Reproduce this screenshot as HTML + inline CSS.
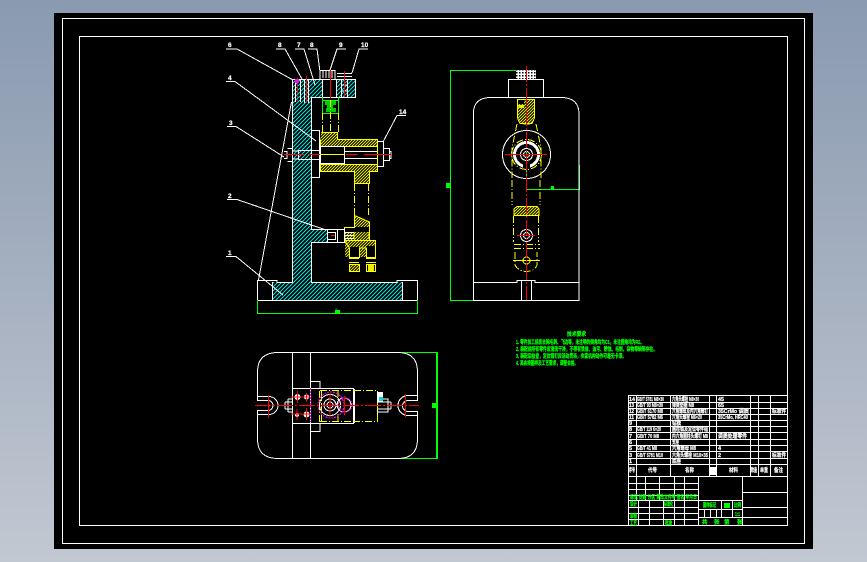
<!DOCTYPE html>
<html><head><meta charset="utf-8"><style>
html,body{margin:0;padding:0;width:867px;height:562px;overflow:hidden;background:linear-gradient(180deg,#8a9ab0 0,#a5b0c0 50%,#c2c8d2 100%)}
svg{position:absolute;left:0;top:0}
text{font-family:"Liberation Sans","Noto Sans CJK SC",sans-serif;font-weight:bold}
.w{fill:none;stroke:#fff;stroke-width:1}
.y{fill:none;stroke:#ff0;stroke-width:1}
.yd{fill:none;stroke:#ff0;stroke-width:1;stroke-dasharray:7 2 1 2}
.g{fill:none;stroke:#0f0;stroke-width:1}
.r{fill:none;stroke:#f00;stroke-width:1}
.rd{fill:none;stroke:#f00;stroke-width:1;stroke-dasharray:16 2 2 2}
.m{fill:none;stroke:#f0f;stroke-width:1;stroke-dasharray:2 1}
.lb{fill:#fff;font-size:6.5px;stroke:#fff;stroke-width:.2}
.tt{fill:#fff;font-size:5.5px;stroke:#fff;stroke-width:.2}
.gt{fill:#0f0;font-size:5.5px;stroke:#0f0;stroke-width:.25}
</style></head><body>
<svg width="867" height="562" viewBox="0 0 867 562" xmlns="http://www.w3.org/2000/svg" shape-rendering="crispEdges">
<defs>
<pattern id="hc" width="4" height="4" patternUnits="userSpaceOnUse"><rect width="4" height="4" fill="#000"/><path d="M-1 1 1-1M0 4 4 0M3 5 5 3" stroke="#0dd" stroke-width="1"/></pattern>
<pattern id="hy" width="3" height="3" patternUnits="userSpaceOnUse"><rect width="3" height="3" fill="#000"/><path d="M-1 1 1-1M0 3 3 0M2 4 4 2" stroke="#dd0" stroke-width="1"/></pattern>
<pattern id="hm" width="3" height="3" patternUnits="userSpaceOnUse"><rect width="3" height="3" fill="#fff"/><rect width="1.5" height="1.5" fill="#000"/></pattern>
</defs>
<rect x="54" y="13" width="759" height="536" fill="#000"/>
<rect class="w" x="62.5" y="18.5" width="742" height="525"/>
<rect class="w" x="79.5" y="36.5" width="708" height="489"/>

<!-- SIDE VIEW -->
<path d="M272 282H292V79H322V97H311V229H327V242H311V282H402V300H272Z" fill="url(#hc)"/>
<rect x="336" y="79" width="19" height="18" fill="url(#hc)"/>
<path class="w" d="M292.5 79.5H355.5V97.5H311.5V229.5H327.5M327.5 242.5H311.5V282.5H397V280.5H417.5V300.5H257.5V280.5H277V282.5H292.5V79.5"/>
<path class="w" d="M272.5 282V300M402.5 282V300M322.5 80V97M336.5 80V97"/>
<path class="w" d="M291.5 102 258.5 280"/>
<rect class="w" x="311.5" y="130.5" width="8" height="47"/>
<path class="w" d="M320 70V79M335 70V79M320.5 70.5H335.5M323 71V78M326 71V78M329 71V78M332 71V78M337 73.5H352M337 76.5H352M341.5 79V97M347.5 79V97M341 85H347M341 91H347"/>
<path class="w" d="M295.5 80V102M300.5 80V102M304.5 80V103M308.5 80V103"/>
<path class="rd" d="M297.5 78V102"/>
<path class="r" d="M306.5 76V103M344.5 71V97M330.5 70V98"/>
<rect x="295" y="79" width="4" height="4" fill="#f0f"/>
<!-- green block -->
<path class="g" d="M322.5 97V113.5H338.5V97M322.5 100.5H338.5"/>
<rect x="325" y="101" width="11" height="4" fill="#0c0"/><rect x="327" y="105" width="6" height="3" fill="#0c0"/><rect x="326" y="108" width="10" height="4" fill="#0c0"/>
<path class="yd" d="M322.5 113V132M338.5 113V132M330.5 100V135"/>
<!-- housing -->
<path d="M321 132H337V139H377V146H320ZM320 164H377V171H369V183H354V171H320Z" fill="url(#hy)"/>
<path class="y" d="M321.5 132.5H337.5V139.5H377.5V171.5H369.5V183.5H354.5V171.5H320.5V139.5"/>
<path class="y" d="M320.5 146.5H377.5M320.5 164.5H377.5"/>
<rect class="w" x="320.5" y="146.5" width="24" height="17"/>
<path class="y" d="M320 154.5H344"/>
<path class="w" d="M344 151.5H377M344 158.5H377M344.5 146V164"/>
<path class="w" d="M377.5 141.5H383.5V166.5H377.5M383.5 148.5H389.5V160.5H383.5M389 151.5H391V158.5H389M284 151.5H287V158.5H284M287.5 148.5H292.5V161.5H287.5M292 151H298.5V159H292M298 150.5H320.5M298 159.5H320.5"/>
<path class="r" d="M284 154.5H304M308 154.5H320M346 154.5H358M364 154.5H391"/>
<path class="yd" d="M354.5 184V215M368.5 184V215"/>
<path d="M354 215 369 222V232H344V240H369V227H354Z" fill="url(#hy)"/>
<path class="y" d="M354.5 215.5 369.5 222V240.5H344.5V227.5H354.5Z"/>
<path d="M345 240H375V246H366V257H359V247H349V257H345Z" fill="url(#hy)"/>
<path class="y" d="M344.5 240.5H375.5V257.5H366.5V248H359.5V257.5H349.5V248L344.5 240.5"/>
<path class="y" d="M349 258.5H359M349 262.5H359M366 258.5H376M366 262.5H376"/>
<rect class="y" x="349.5" y="264.5" width="10" height="7"/><rect class="y" x="366.5" y="264.5" width="9" height="7"/>
<rect x="350" y="265" width="9" height="6" fill="url(#hy)"/><rect x="368" y="265" width="6" height="6" fill="#ee0"/>
<!-- arm box -->
<path class="w" d="M327.5 229.5H344.5V242.5H327.5ZM337.5 229.5V242.5M344 232.5H354M344 235.5H354M344 238.5H354"/>
<rect class="w" x="327.5" y="232.5" width="8" height="7"/>
<path class="r" d="M331 235.5H335"/>
<path class="yd" d="M354 232V240M369 232V240"/>
<!-- leaders -->
<path class="w" d="M226 49H237L293 80M276 49H285L302 79M295 49H304L315 85M308 49H317L320 72M346 49H337L330 70M368 49H359L352 73M226 81.5H235L316 141M227 126.5H236L284 157M406 115.5H397L383 142M227 199.5H237L326 230M226 256.5H236L283 295"/>
<text class="lb" x="228" y="47">6</text><text class="lb" x="278" y="47">8</text><text class="lb" x="297" y="47">7</text><text class="lb" x="310" y="47">8</text><text class="lb" x="339" y="47">9</text><text class="lb" x="361" y="47">10</text>
<text class="lb" x="228" y="80">4</text><text class="lb" x="229" y="125">3</text><text class="lb" x="399" y="114">14</text><text class="lb" x="228" y="198">2</text><text class="lb" x="228" y="255">1</text>
<path d="M257.5 300V314M417.5 300V314M258 313.5H417" fill="none" stroke="#0f0"/>
<rect x="335" y="310" width="5" height="4" fill="#0f0"/>
<text x="335" y="311" fill="#0f0" font-size="4">1</text>

<!-- FRONT VIEW -->
<path class="g" d="M516 70.5H450.5V300.5H473M526.5 150V189.5H579.5V165"/>
<rect x="446" y="183" width="4" height="5" fill="#0f0"/><rect x="551" y="186" width="3" height="4" fill="#0f0"/>
<text x="446" y="187" fill="#0f0" font-size="4">1</text>
<path class="w" d="M473.5 300.5V113Q473.5 98 490 97.5H562Q578.5 98 579 113V300.5H473.5ZM473.5 282.5H517V280.5H535V282.5H579M521.5 281V300M531.5 281V300"/>
<rect class="w" x="508.5" y="79.5" width="35" height="18"/>
<rect x="516" y="70" width="20" height="9" fill="url(#hm)"/>
<circle class="w" cx="526.5" cy="154.5" r="24"/>
<circle cx="526.5" cy="154.5" r="12" fill="none" stroke="#fff" stroke-width="3"/>
<circle class="w" cx="526.5" cy="154.5" r="6"/><circle class="w" cx="526.5" cy="154.5" r="3"/>
<rect x="523" y="162" width="7" height="6" fill="#000"/>
<circle class="yd" cx="526.5" cy="154.5" r="15"/>
<path d="M517 99H535V117L532 123H520L517 117Z" fill="url(#hy)"/>
<path class="y" d="M517.5 99.5H534.5V118L532 123.5H520L517.5 118ZM517.5 107H524M528 123.5H520M523.5 124H530"/>
<rect x="518" y="100" width="6" height="4" fill="#000"/><rect x="519" y="105" width="5" height="3" fill="#ee0"/>
<path class="yd" d="M517 124 512 148V178M536 124 541 148V178"/>
<path class="y" d="M508 154.5H514M539 154.5H545"/>
<path class="yd" d="M512 180V205M540 180V205"/>
<path d="M514 207H539V215H514Z" fill="url(#hy)"/>
<path class="y" d="M517 206.5H537L539 209V215.5H514V209Z"/>
<path class="yd" d="M513.5 216V242M538.5 216V242M514 244.5H540M514 248.5H540"/>
<path class="yd" d="M515 252V265Q518 271 526 271.5 535 271 537 265V252"/>
<circle class="y" cx="526.5" cy="260.5" r="3.5"/>
<path class="y" d="M513 260.5H540"/>
<circle class="w" cx="526.5" cy="235.5" r="6"/><circle class="w" cx="526.5" cy="235.5" r="3"/>
<path class="r" d="M517 235.5H535M505 154.5H547"/>
<path class="rd" d="M526.5 66V300"/>

<!-- TOP VIEW -->
<path class="g" d="M399 352.5H437.5V458.5H399M436.5 352V458"/>
<rect x="432" y="403" width="4" height="5" fill="#0f0"/>
<text x="432" y="407" fill="#0f0" font-size="4">1</text>
<path class="w" d="M277 352.5H399Q417 353 417.5 371V400.5H408A5.5 5.5 0 0 0 408 411.5H417.5V440Q417 458 399 458.5H277Q258 458 257.5 440V410.5H268A5 5 0 0 0 268 400.5H257.5V371Q258 353 277 352.5Z"/>
<path class="w" d="M257.5 396.5H269A9 9 0 0 1 269 414.5H257.5M417 395.5H408A10 10 0 0 0 408 415.5H417"/>
<path class="w" d="M292.5 352V458M310.5 352V458M292.5 388.5H353.5V423.5H292.5M310.5 381.5H320V388M310.5 431.5H320V424M354.5 389V423"/>
<path class="w" d="M285 402H292M285 409H292M285 402V409M288 399H292M288 412H292M288 399V412M377.5 392V422M377 402H391M377 409H391M391 402V409M377 399H388V412H377"/>
<path class="yd" d="M320 390.5H354M354 390.5H377.5V421.5H354M320 421.5H354M319.5 391V422M321.5 391V422M338 390V422"/>
<circle class="w" cx="330" cy="405" r="10.5"/><circle class="w" cx="330" cy="405" r="6"/><circle class="w" cx="330" cy="405" r="3"/><circle class="w" cx="344" cy="405" r="7"/>
<circle class="m" cx="331" cy="405" r="13"/><circle class="m" cx="345" cy="405" r="7"/>
<path class="m" d="M310.5 388V422"/>
<circle cx="297.5" cy="397" r="3" fill="#fff"/><circle cx="306.5" cy="397" r="2.5" fill="#fff"/><circle cx="297" cy="415" r="2" fill="#fff"/><circle cx="306.5" cy="414.5" r="3" fill="#fff"/>
<rect x="377" y="392" width="6" height="10" fill="#fff"/><rect x="379" y="397" width="4" height="4" fill="#0dd"/>
<path class="r" d="M291 397H310M297.5 391V403M306.5 393V402M291 414H310M297 409V420M306.5 408V420M330 393V417M344.5 396V415M268.5 395V418M405.5 394V417"/>
<path class="rd" d="M255 405.5H419"/>

<!-- NOTES -->
<text class="gt" x="567" y="336" textLength="19" lengthAdjust="spacingAndGlyphs">技术要求</text>
<text class="gt" x="516" y="344" textLength="128" lengthAdjust="spacingAndGlyphs">1. 零件加工前应去除毛刺、飞边等，未注明的倒角均为C1，未注圆角均为R2。</text>
<text class="gt" x="516" y="351" textLength="141" lengthAdjust="spacingAndGlyphs">2. 装配前所有零件应清洗干净，不得有铁屑、油污、锈蚀、毛刺、杂物等缺陷存在。</text>
<text class="gt" x="516" y="358" textLength="110" lengthAdjust="spacingAndGlyphs">3. 装配后检查，定位销钉应活动灵活，夹紧机构动作可靠无卡滞。</text>
<text class="gt" x="516" y="365" textLength="62" lengthAdjust="spacingAndGlyphs">4. 其余按图样及工艺要求，调整合格。</text>

<!-- TITLE BLOCK -->
<path class="w" d="M628.5 395.5H787.5M628.5 402.5H787M628.5 408.5H787M628.5 414.5H787M628.5 420.5H787M628.5 426.5H787M628.5 432.5H787M628.5 439.5H787M628.5 445.5H787M628.5 451.5H787M628.5 458.5H787M628.5 464.5H787M628.5 476.5H787"/>
<path class="w" d="M628.5 395V525M636.5 395V476M670.5 395V476M709.5 395V476M716.5 395V476M750.5 395V476M758.5 395V476M770.5 395V476"/>
<path class="w" d="M628 483.5H698M628 489.5H698M628 495.5H698M628 500.5H698M628 507.5H698M628 513.5H698M628 519.5H698"/>
<path class="w" d="M636.5 476V500M645.5 476V500M659.5 476V500M674.5 476V500M684.5 476V500M698.5 476V525M638.5 500V525M649.5 500V525M663.5 500V525M674.5 500V525M684.5 500V525"/>
<path class="w" d="M742.5 476V525M742 492.5H787M742 507.5H787M742 517.5H787M698 500.5H742M698 509.5H742M698 517.5H742M721.5 500V517M732.5 500V517M704.5 509V517M710.5 509V517M716.5 509V517"/>
<text class="tt" x="629" y="401" textLength="6" lengthAdjust="spacingAndGlyphs">14</text><text class="tt" x="637" y="401" textLength="27" lengthAdjust="spacingAndGlyphs">GB/T 5781 M8×30</text><text class="tt" x="672" y="401" textLength="27" lengthAdjust="spacingAndGlyphs">六角头螺栓 M8×30</text><text class="tt" x="718" y="401" textLength="6" lengthAdjust="spacingAndGlyphs">45</text>
<text class="tt" x="629" y="407" textLength="5" lengthAdjust="spacingAndGlyphs">13</text><text class="tt" x="637" y="407" textLength="26" lengthAdjust="spacingAndGlyphs">GB/T 93 M8×30</text><text class="tt" x="672" y="407" textLength="22" lengthAdjust="spacingAndGlyphs">弹簧垫圈 M8</text><text class="tt" x="718" y="407" textLength="6" lengthAdjust="spacingAndGlyphs">65</text>
<text class="tt" x="629" y="413" textLength="5" lengthAdjust="spacingAndGlyphs">12</text><text class="tt" x="637" y="413" textLength="26" lengthAdjust="spacingAndGlyphs">GB/T 6170 M8</text><text class="tt" x="672" y="413" textLength="36" lengthAdjust="spacingAndGlyphs">六角螺母及内六角螺钉</text><text class="tt" x="718" y="413" textLength="31" lengthAdjust="spacingAndGlyphs">35CrMo 调质</text><text class="tt" x="772" y="413" textLength="14" lengthAdjust="spacingAndGlyphs">标准件</text>
<text class="tt" x="629" y="419" textLength="5" lengthAdjust="spacingAndGlyphs">11</text><text class="tt" x="637" y="419" textLength="26" lengthAdjust="spacingAndGlyphs">GB/T 5782 M6</text><text class="tt" x="672" y="419" textLength="30" lengthAdjust="spacingAndGlyphs">六角头螺栓 M6×20</text><text class="tt" x="718" y="419" textLength="30" lengthAdjust="spacingAndGlyphs">35CrMo, HRC40</text>
<text class="tt" x="629" y="425">9</text><text class="tt" x="672" y="425" textLength="9" lengthAdjust="spacingAndGlyphs">钻模</text>
<text class="tt" x="629" y="431">8</text><text class="tt" x="637" y="431" textLength="24" lengthAdjust="spacingAndGlyphs">GB/T 119 6×20</text><text class="tt" x="672" y="431" textLength="36" lengthAdjust="spacingAndGlyphs">圆柱销及定位零件组</text>
<text class="tt" x="629" y="438">7</text><text class="tt" x="637" y="438" textLength="22" lengthAdjust="spacingAndGlyphs">GB/T 70 M8</text><text class="tt" x="672" y="438" textLength="36" lengthAdjust="spacingAndGlyphs">内六角圆柱头螺钉 M8</text><text class="tt" x="718" y="438" textLength="29" lengthAdjust="spacingAndGlyphs">调质处理零件</text>
<text class="tt" x="629" y="444">6</text><text class="tt" x="672" y="444" textLength="7" lengthAdjust="spacingAndGlyphs">支座</text>
<text class="tt" x="629" y="450">5</text><text class="tt" x="637" y="450" textLength="20" lengthAdjust="spacingAndGlyphs">GB/T 41 M8</text><text class="tt" x="672" y="450" textLength="24" lengthAdjust="spacingAndGlyphs">六角螺母 M8</text><text class="tt" x="718" y="450">4</text>
<text class="tt" x="629" y="457">3</text><text class="tt" x="637" y="457" textLength="26" lengthAdjust="spacingAndGlyphs">GB/T 5781 M10</text><text class="tt" x="672" y="457" textLength="36" lengthAdjust="spacingAndGlyphs">六角头螺栓 M10×35</text><text class="tt" x="718" y="457">2</text><text class="tt" x="772" y="457" textLength="14" lengthAdjust="spacingAndGlyphs">标准件</text>
<text class="tt" x="629" y="463">1</text><text class="tt" x="672" y="463" textLength="9" lengthAdjust="spacingAndGlyphs">底座</text>
<text class="tt" x="629" y="472" textLength="6" lengthAdjust="spacingAndGlyphs">序号</text><text class="tt" x="648" y="472" textLength="9" lengthAdjust="spacingAndGlyphs">代号</text><text class="tt" x="685" y="472" textLength="9" lengthAdjust="spacingAndGlyphs">名称</text><text class="tt" x="729" y="472" textLength="9" lengthAdjust="spacingAndGlyphs">材料</text><text class="tt" x="751" y="472" textLength="6" lengthAdjust="spacingAndGlyphs">数量</text><text class="tt" x="760" y="472" textLength="8" lengthAdjust="spacingAndGlyphs">单重</text><text class="tt" x="774" y="472" textLength="9" lengthAdjust="spacingAndGlyphs">备注</text>
<rect x="709" y="467" width="7" height="8" fill="#fff"/>
<text class="gt" x="630" y="499" textLength="67" lengthAdjust="spacingAndGlyphs">标记 处数 分区 更改文件号 签名 年月日</text>
<text class="gt" x="630" y="506" textLength="7" lengthAdjust="spacingAndGlyphs">设计</text>
<text class="gt" x="664" y="506" textLength="9" lengthAdjust="spacingAndGlyphs">标准化</text>
<text class="gt" x="630" y="518" textLength="7" lengthAdjust="spacingAndGlyphs">审核</text>
<text class="gt" x="630" y="525" textLength="7" lengthAdjust="spacingAndGlyphs">工艺</text>
<text class="gt" x="665" y="525" textLength="7" lengthAdjust="spacingAndGlyphs">批准</text>
<text class="gt" x="703" y="507" textLength="13" lengthAdjust="spacingAndGlyphs">图样标记</text>
<rect x="724" y="503" width="6" height="5" fill="#0f0"/>
<text class="gt" x="734" y="507" textLength="7" lengthAdjust="spacingAndGlyphs">比例</text>
<text class="gt" x="735" y="516" textLength="5" lengthAdjust="spacingAndGlyphs">1:1</text>
<text class="gt" x="702" y="524">共</text><text class="gt" x="714" y="524">张</text><text class="gt" x="724" y="524">第</text><text class="gt" x="737" y="524">张</text>
</svg>
</body></html>
